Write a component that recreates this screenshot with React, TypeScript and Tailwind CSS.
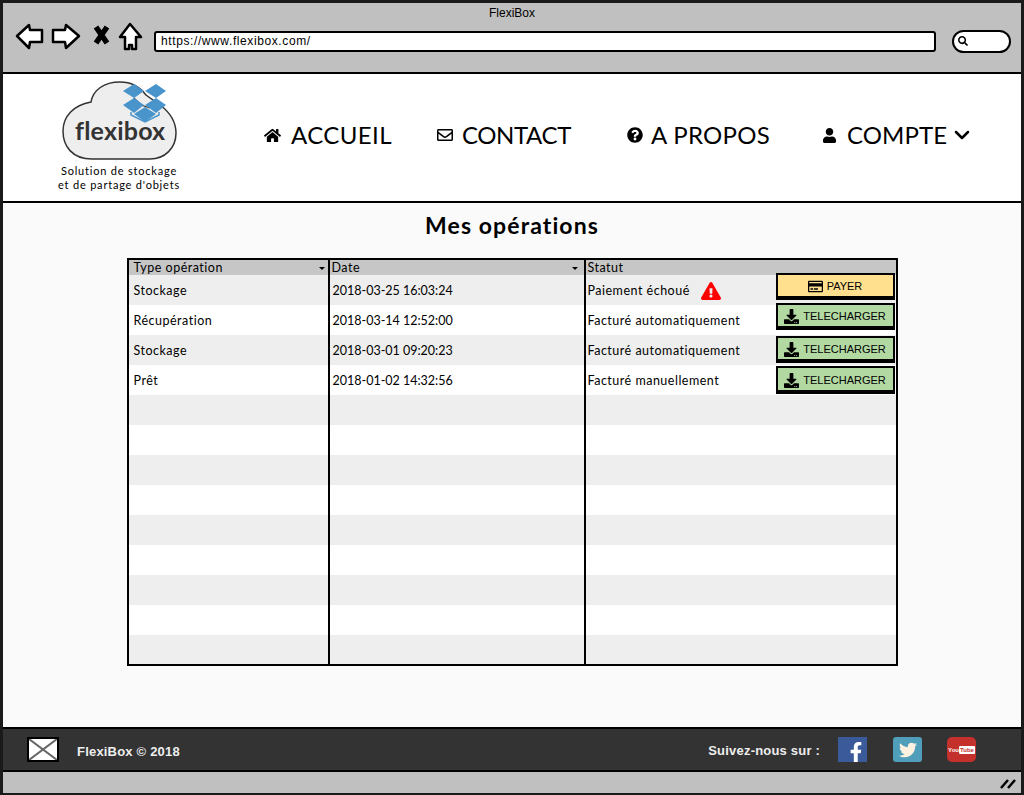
import { ChevronDown } from "lucide-react";
import {
  FaDownload,
  FaExclamationTriangle,
  FaFacebookF,
  FaHome,
  FaQuestionCircle,
  FaRegCreditCard,
  FaRegEnvelope,
  FaSearch,
  FaTwitter,
  FaUser,
} from "react-icons/fa";

const rows = [
  { type: "Stockage", date: "2018-03-25 16:03:24", statut: "Paiement échoué", action: "pay", top: "-mt-[2px]", height: "h-[27px]" },
  { type: "Récupération", date: "2018-03-14 12:52:00", statut: "Facturé automatiquement", action: "dl", top: "-mt-[2px]", height: "h-[27px]" },
  { type: "Stockage", date: "2018-03-01 09:20:23", statut: "Facturé automatiquement", action: "dl", top: "mt-[1px]", height: "h-[27px]" },
  { type: "Prêt", date: "2018-01-02 14:32:56", statut: "Facturé manuellement", action: "dl", top: "mt-[1px]", height: "h-[28px]" },
  ...Array.from({ length: 9 }, () => ({ type: "", date: "", statut: "", action: "", top: "", height: "" })),
];

const BrowserIcons = () => (
  <svg width="132" height="30" viewBox="0 0 132 30" fill="white" stroke="black" strokeWidth="2.5" strokeLinejoin="round" className="shrink-0 -translate-y-[4px]">
    <path d="M2 14 L14 3 L15 8 L27 8 L27 20 L15 20 L14 26 Z" />
    <path d="M38 8 L50 8 L51 3 L64 14 L51 26 L50 20 L38 20 Z" />
    <path d="M81 5 L92 21 M92 5 L81 21" strokeWidth="5.5" strokeLinejoin="miter" />
    <path d="M105 15 L115 2 L126 15 L121 15 L121 27 L117 27 L117 23 L114 23 L114 27 L110 27 L110 15 Z" />
  </svg>
);

const Logo = () => (
  <div className="relative w-[116px] h-[82px]">
    <svg width="116" height="82" viewBox="0 0 116 82" className="block">
      <path
        d="M30 78 C10 78 1 65 1 50 C1 35 12 24 29 21 C31 9 42 1 58 1 C70 1 78 6 84 14 L98 24 C106 30 114 38 114 52 C114 67 103 78 88 78 Z"
        fill="#eeeeee"
        stroke="#333333"
        strokeWidth="1.5"
      />
      <path d="M72 17 L79 24 L88 27" fill="none" stroke="#333333" strokeWidth="1.2" />
      <g fill="#4a94cc">
        <path d="M61 10 L72 3 L82 10 L72 17 Z" />
        <path d="M83 10 L94 3 L104 10 L94 17 Z" />
        <path d="M61 24 L72 17 L82 24 L72 32 Z" />
        <path d="M83 24 L94 17 L104 24 L94 32 Z" />
        <path d="M72 33 L83 26 L94 33 L83 41 Z" />
      </g>
      <path d="M69 31 L69 34 L83 41 L97 34 L97 31" fill="none" stroke="#4a94cc" strokeWidth="1.5" />
    </svg>
    <span className="absolute left-[13px] top-[34px] text-[25px] leading-[30px] font-bold text-[#333333] tracking-[0.2px]">flexibox</span>
  </div>
);

const NavItem = ({ icon, label, className, labelClass }: { icon: React.ReactNode; label: string; className: string; labelClass: string }) => (
  <div className={`flex items-center ${className}`}>
    {icon}
    <span className={`text-[24px] leading-none text-black ${labelClass}`}>{label}</span>
  </div>
);

const ActionButton = ({ kind, className }: { kind: string; className: string }) => {
  if (kind === "pay") {
    return (
      <div className={`flex items-center justify-center gap-[4px] w-[119px] pt-[2px] bg-[#ffe08e] border-2 border-black border-b-4 text-[11px] tracking-normal font-['Liberation_Sans',sans-serif] ${className}`}>
        <FaRegCreditCard className="text-[15px]" />
        PAYER
      </div>
    );
  }
  return (
    <div className={`flex items-center justify-center gap-[4px] w-[119px] pt-[2px] bg-[#b3d9a3] border-2 border-black border-b-4 text-[11px] tracking-normal font-['Liberation_Sans',sans-serif] ${className}`}>
      <FaDownload className="text-[15px]" />
      TELECHARGER
    </div>
  );
};

const App = () => {
  return (
    <div className="w-[1024px] h-[795px] overflow-hidden bg-white font-['Lato',sans-serif] text-black border-[3px] border-[#1a1a1a] border-b-2 flex flex-col">
      {/* barre du navigateur */}
      <div className="h-[71px] bg-[#c0c0c0] shrink-0 border-b-2 border-black pl-[12px]">
        <div className="text-center text-[12px] leading-[20px] pr-[12px] font-['Liberation_Sans',sans-serif]">FlexiBox</div>
        <div className="flex items-center mt-[3px]">
          <BrowserIcons />
          <div className="shrink-0 ml-[7px] w-[782px] h-[21px] bg-white border-2 border-black rounded-[3px] pl-[5px] text-[12px] leading-[16px] tracking-[0.6px] font-['Liberation_Sans',sans-serif]">
            https://www.flexibox.com/
          </div>
          <div className="shrink-0 ml-[16px] w-[59px] h-[23px] bg-white border-2 border-black rounded-full flex items-center pl-[4px]">
            <FaSearch className="text-[10px]" />
          </div>
        </div>
      </div>

      {/* entête */}
      <div className="h-[129px] shrink-0 border-b-2 border-black bg-white flex items-start">
        <div className="w-[232px] flex flex-col items-center pt-[7px]">
          <div className="ml-[2px]"><Logo /></div>
          <div className="text-[11px] leading-[14px] tracking-[0.8px] text-center mt-[1px]">
            Solution de stockage
            <br />
            et de partage d'objets
          </div>
        </div>
        <div className="flex items-center mt-[49px] ml-[29px]">
          <NavItem icon={<FaHome className="text-[17px] mr-[10px]" />} label="ACCUEIL" className="w-[173px]" labelClass="tracking-[0.4px]" />
          <NavItem icon={<FaRegEnvelope className="text-[16px] mr-[9px]" />} label="CONTACT" className="w-[190px]" labelClass="tracking-[-0.4px]" />
          <NavItem icon={<FaQuestionCircle className="text-[16px] mr-[8px]" />} label="A PROPOS" className="w-[195px]" labelClass="tracking-[0.3px]" />
          <NavItem icon={<FaUser className="text-[15px] mr-[10px]" />} label="COMPTE" className="" labelClass="tracking-[0.1px]" />
          <ChevronDown size={24} strokeWidth={2.5} className="ml-[3px]" />
        </div>
      </div>

      {/* contenu */}
      <div className="flex-1 bg-[#fafafa] flex flex-col items-center">
        <h1 className="text-[23px] leading-[28px] font-bold mt-[8px] tracking-[1.1px]">Mes opérations</h1>
        <div className="mt-[19px] w-[771px] border-2 border-black bg-white text-[12.5px]">
          <div className="grid grid-cols-[201px_256px_1fr] h-[15px] bg-[#c6c6c6] leading-[15px] tracking-[0.5px]">
            <div className="relative border-r-2 border-black pl-[5px]">
              Type opération
              <span className="absolute right-[3px] top-[7px] border-x-[3px] border-t-[3px] border-x-transparent border-t-black"></span>
            </div>
            <div className="relative border-r-2 border-black pl-[2px]">
              Date
              <span className="absolute right-[6px] top-[7px] border-x-[3px] border-t-[3px] border-x-transparent border-t-black"></span>
            </div>
            <div className="pl-[2px]">Statut</div>
          </div>
          {rows.map((row, i) => (
            <div key={i} className={`grid grid-cols-[201px_256px_1fr] tracking-[0.5px] ${i === 12 ? "h-[29px]" : "h-[30px]"} ${i % 2 === 0 ? "bg-[#eeeeee]" : "bg-white"}`}>
              <div className="border-r-2 border-black pl-[5px] leading-[31px]">{row.type}</div>
              <div className="border-r-2 border-black pl-[3px] leading-[31px] tracking-normal">{row.date}</div>
              <div className="pl-[2px] flex items-start justify-between leading-[31px]">
                <span className="flex items-center">
                  {row.statut}
                  {row.action === "pay" && <FaExclamationTriangle className="text-[20px] text-[#f00] ml-[11px]" />}
                </span>
                {row.action && (
                  <span className="mr-[1px]">
                    <ActionButton kind={row.action} className={`${row.top} ${row.height}`} />
                  </span>
                )}
              </div>
            </div>
          ))}
        </div>
      </div>

      {/* pied de page */}
      <div className="h-[45px] shrink-0 bg-[#333333] border-y-2 border-black flex items-center text-[#eeeeee] text-[13px] font-bold tracking-[0.2px] font-['Liberation_Sans',sans-serif]">
        <div className="ml-[24px] w-[32px] h-[25px] bg-white border-2 border-black">
          <svg width="28" height="21" viewBox="0 0 28 21">
            <path d="M0 0 L28 21 M28 0 L0 21" stroke="#666666" strokeWidth="2" />
          </svg>
        </div>
        <span className="ml-[18px] mt-[5px]">FlexiBox © 2018</span>
        <span className="ml-auto mt-[2px]">Suivez-nous sur :</span>
        <div className="ml-[18px] w-[29px] h-[25px] bg-[#3b5a9a] flex items-end justify-center overflow-hidden">
          <FaFacebookF className="text-white text-[20px] translate-x-[3px]" />
        </div>
        <div className="ml-[26px] w-[29px] h-[25px] bg-[#4f9fbb] rounded-[3px] flex items-center justify-center">
          <FaTwitter className="text-[#fdf1e0] text-[18px]" />
        </div>
        <div className="ml-[25px] mr-[45px] w-[29px] h-[25px] bg-[#c4302b] rounded-[5px] flex items-center justify-center text-white text-[6px] leading-[8px] tracking-normal">
          You<span className="bg-white text-[#c4302b] px-[1px] rounded-[1px]">Tube</span>
        </div>
      </div>

      {/* barre d'état */}
      <div className="h-[21px] shrink-0 bg-[#c0c0c0] flex items-center justify-end pr-[5px]">
        <svg width="16" height="12" viewBox="0 0 16 12">
          <path d="M1 11 L8 3 M8 11 L15 3" stroke="black" strokeWidth="2.5" />
        </svg>
      </div>
    </div>
  );
};

export default App;
